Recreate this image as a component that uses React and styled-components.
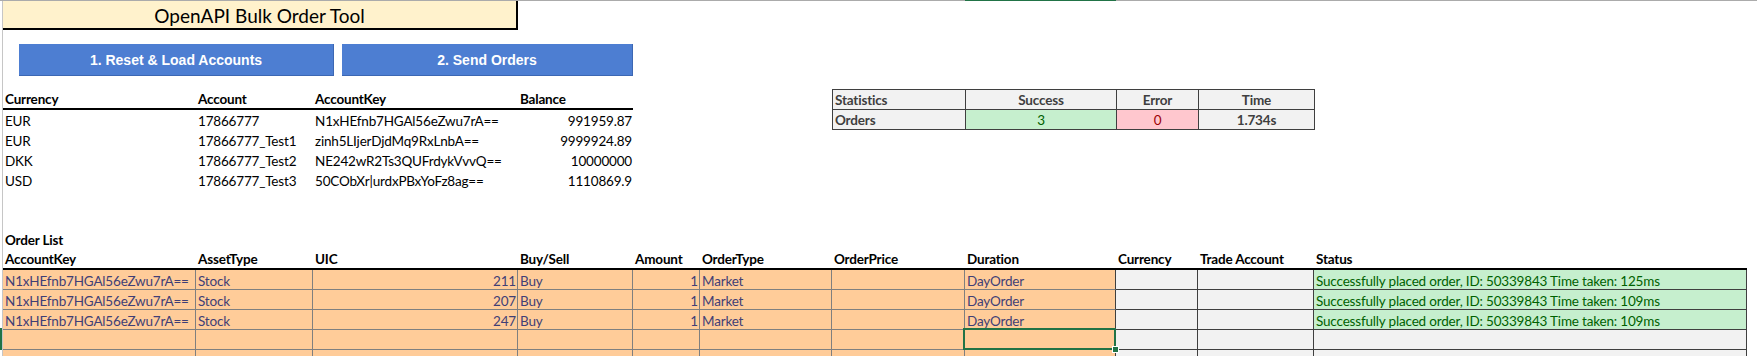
import React from "react";
import styled, { createGlobalStyle, css } from "styled-components";

const GlobalStyle = createGlobalStyle`
  html, body { margin: 0; padding: 0; background: #ffffff; overflow: hidden; }
  body { font-family: Lato, "Noto Sans", sans-serif; color: #000; }
`;

const CELL_FONT = `Lato, "Noto Sans", sans-serif`;

const Page = styled.div`
  width: 1757px;
  height: 356px;
  overflow: hidden;
`;

const TopRule = styled.div`
  display: grid;
  grid-template-columns: 965px 151px 1fr;
  height: 1px;
`;

const RuleSegment = styled.div`
  background: ${(p) => (p.$green ? "#217346" : "#ababab")};
`;

const Frame = styled.div`
  display: flex;
  align-items: stretch;
`;

const RowStrip = styled.div`
  flex: 0 0 2px;
  width: 2px;
  border-right: 1px solid #c6c6c6;
  display: flex;
  flex-direction: column;
  height: 355px;
`;

const StripSpacer = styled.div`
  flex: 0 0 ${(p) => p.$h}px;
`;

const ActiveRowMark = styled.div`
  flex: 0 0 22px;
  background: #217346;
`;

const Sheet = styled.div`
  display: flex;
  flex-direction: column;
  width: 1744px;
  font-family: ${CELL_FONT};
  font-size: 13.5px;
  letter-spacing: -0.18px;
`;

const TitleBox = styled.div`
  box-sizing: border-box;
  width: 515px;
  height: 29px;
  background: #fff2cc;
  border-right: 2px solid #000;
  border-bottom: 2px solid #000;
  display: flex;
  align-items: center;
  justify-content: center;
  font-size: 19px;
  letter-spacing: 0;
  color: #000;
  padding-top: 2px;
`;

const ButtonRow = styled.div`
  display: flex;
  gap: 8px;
  padding: 14px 0 0 16px;
`;

const ActionButton = styled.div`
  box-sizing: border-box;
  width: ${(p) => p.$width}px;
  height: 32px;
  background: #4d7ed2;
  border-right: 1px solid #3c67b3;
  border-bottom: 1px solid #3c67b3;
  color: #ffffff;
  font-family: "Liberation Sans", Arial, sans-serif;
  font-weight: 700;
  font-size: 14px;
  letter-spacing: 0;
  display: flex;
  align-items: center;
  justify-content: center;
`;

const DataBand = styled.div`
  display: flex;
  margin-top: 13px;
`;

const AccountGrid = styled.div`
  display: grid;
  grid-template-columns: 193px 117px 205px 115px;
`;

const cellText = css`
  box-sizing: border-box;
  height: 20px;
  line-height: 20px;
  padding: 1px 2px 0 2px;
  white-space: nowrap;
  overflow: hidden;
`;

const HeadCell = styled.div`
  ${cellText};
  height: 21px;
  font-weight: 700;
  border-bottom: 2px solid #000;
  line-height: 19px;
  text-align: left;
`;

const AccCell = styled.div`
  ${cellText};
  text-align: ${(p) => p.$align || "left"};
  padding-right: ${(p) => (p.$align === "right" ? "1px" : "2px")};
`;

const StatsGrid = styled.div`
  margin-left: 199px;
  display: grid;
  grid-template-columns: 133px 151px 82px 116px;
  align-self: flex-start;
  border-top: 1px solid #3f3f3f;
  border-left: 1px solid #3f3f3f;
`;

const statTones = {
  plain: { bg: "#f2f2f2", fg: "#3f3f3f" },
  good: { bg: "#c6efce", fg: "#006100" },
  bad: { bg: "#ffc7ce", fg: "#9c0006" },
};

const StatCell = styled.div`
  ${cellText};
  height: 20px;
  line-height: 19px;
  border-right: 1px solid #3f3f3f;
  border-bottom: 1px solid #3f3f3f;
  background: ${(p) => statTones[p.$tone || "plain"].bg};
  color: ${(p) => statTones[p.$tone || "plain"].fg};
  font-weight: ${(p) => (p.$bold ? 700 : 400)};
  text-align: ${(p) => p.$align || "left"};
`;

const OrderSection = styled.div`
  display: flex;
  flex-direction: column;
  margin-top: 39px;
`;

const SectionLabel = styled.div`
  ${cellText};
  font-weight: 700;
`;

const OrderGrid = styled.div`
  display: grid;
  grid-template-columns: 193px 117px 205px 115px 67px 132px 133px 151px 82px 116px 433px;
`;

const OrderHead = styled(HeadCell)``;

const cellKinds = {
  input: { bg: "#ffcc99", fg: "#3f3f76", line: "#7f7f7f" },
  calc: { bg: "#f2f2f2", fg: "#3f3f3f", line: "#3f3f3f" },
  good: { bg: "#c6efce", fg: "#006100", line: "#3f3f3f" },
};

const OrderCell = styled.div`
  ${cellText};
  position: relative;
  background: ${(p) => cellKinds[p.$kind].bg};
  color: ${(p) => cellKinds[p.$kind].fg};
  border-bottom: 1px solid ${(p) => cellKinds[p.$kind].line};
  border-right: 1px solid ${(p) => (p.$edge ? "#3f3f3f" : cellKinds[p.$kind].line)};
  text-align: ${(p) => p.$align || "left"};
  padding-right: ${(p) => (p.$align === "right" ? "1px" : "2px")};
  overflow: visible;
  ${(p) =>
    p.$active &&
    css`
      z-index: 2;
      &::after {
        content: "";
        position: absolute;
        left: -2px;
        top: -2px;
        right: -1px;
        bottom: -1px;
        border: 2px solid #217346;
      }
      &::before {
        content: "";
        position: absolute;
        right: -4px;
        bottom: -4px;
        width: 5px;
        height: 5px;
        background: #217346;
        border: 1px solid #ffffff;
        z-index: 3;
      }
    `}
`;

const accounts = [
  ["EUR", "17866777", "N1xHEfnb7HGAl56eZwu7rA==", "991959.87"],
  ["EUR", "17866777_Test1", "zinh5LIjerDjdMq9RxLnbA==", "9999924.89"],
  ["DKK", "17866777_Test2", "NE242wR2Ts3QUFrdykVvvQ==", "10000000"],
  ["USD", "17866777_Test3", "50CObXr|urdxPBxYoFz8ag==", "1110869.9"],
];

const orderCols = [
  { title: "AccountKey", kind: "input" },
  { title: "AssetType", kind: "input" },
  { title: "UIC", kind: "input", align: "right" },
  { title: "Buy/Sell", kind: "input" },
  { title: "Amount", kind: "input", align: "right" },
  { title: "OrderType", kind: "input" },
  { title: "OrderPrice", kind: "input" },
  { title: "Duration", kind: "input", edge: true },
  { title: "Currency", kind: "calc" },
  { title: "Trade Account", kind: "calc" },
  { title: "Status", kind: "calc" },
];

const KEY = "N1xHEfnb7HGAl56eZwu7rA==";
const orders = [
  [KEY, "Stock", "211", "Buy", "1", "Market", "", "DayOrder", "", "", "Successfully placed order, ID: 50339843 Time taken: 125ms"],
  [KEY, "Stock", "207", "Buy", "1", "Market", "", "DayOrder", "", "", "Successfully placed order, ID: 50339843 Time taken: 109ms"],
  [KEY, "Stock", "247", "Buy", "1", "Market", "", "DayOrder", "", "", "Successfully placed order, ID: 50339843 Time taken: 109ms"],
  ["", "", "", "", "", "", "", "", "", "", ""],
  ["", "", "", "", "", "", "", "", "", "", ""],
];

export default function App() {
  return (
    <Page>
      <GlobalStyle />
      <TopRule>
        <RuleSegment />
        <RuleSegment $green />
        <RuleSegment />
      </TopRule>
      <Frame>
        <RowStrip>
          <StripSpacer $h={327} />
          <ActiveRowMark />
        </RowStrip>
        <Sheet>
          <TitleBox>OpenAPI Bulk Order Tool</TitleBox>
          <ButtonRow>
            <ActionButton $width={315}>1. Reset &amp; Load Accounts</ActionButton>
            <ActionButton $width={291}>2. Send Orders</ActionButton>
          </ButtonRow>
          <DataBand>
            <AccountGrid>
              <HeadCell>Currency</HeadCell>
              <HeadCell>Account</HeadCell>
              <HeadCell>AccountKey</HeadCell>
              <HeadCell>Balance</HeadCell>
              {accounts.map((row, i) => (
                <React.Fragment key={i}>
                  <AccCell>{row[0]}</AccCell>
                  <AccCell>{row[1]}</AccCell>
                  <AccCell>{row[2]}</AccCell>
                  <AccCell $align="right">{row[3]}</AccCell>
                </React.Fragment>
              ))}
            </AccountGrid>
            <StatsGrid>
              <StatCell $bold>Statistics</StatCell>
              <StatCell $bold $align="center">Success</StatCell>
              <StatCell $bold $align="center">Error</StatCell>
              <StatCell $bold $align="center">Time</StatCell>
              <StatCell $bold>Orders</StatCell>
              <StatCell $tone="good" $align="center">3</StatCell>
              <StatCell $tone="bad" $align="center">0</StatCell>
              <StatCell $bold $align="center">1.734s</StatCell>
            </StatsGrid>
          </DataBand>
          <OrderSection>
            <SectionLabel>Order List</SectionLabel>
            <OrderGrid>
              {orderCols.map((c) => (
                <OrderHead key={c.title}>{c.title}</OrderHead>
              ))}
              {orders.map((row, r) =>
                row.map((val, c) => {
                  const col = orderCols[c];
                  const kind = c === 10 && val ? "good" : col.kind;
                  return (
                    <OrderCell
                      key={`${r}-${c}`}
                      $kind={kind}
                      $align={col.align}
                      $edge={col.edge}
                      $active={r === 3 && c === 7}
                    >
                      {val}
                    </OrderCell>
                  );
                })
              )}
            </OrderGrid>
          </OrderSection>
        </Sheet>
      </Frame>
    </Page>
  );
}
